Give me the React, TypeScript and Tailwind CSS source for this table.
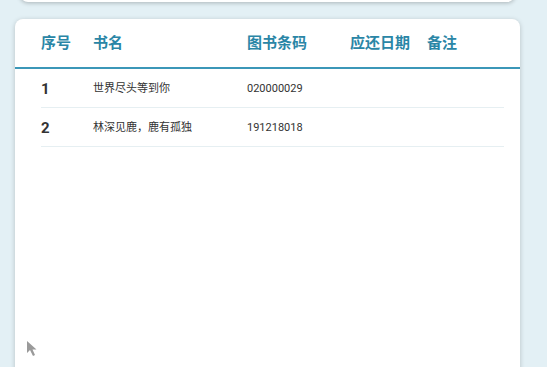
const rows = [
  { no: 1, title: "世界尽头等到你", code: "020000029", due: "", note: "" },
  { no: 2, title: "林深见鹿，鹿有孤独", code: "191218018", due: "", note: "" },
];

const font = { fontFamily: '"Roboto", "Noto Sans CJK SC", sans-serif' };

export default function App() {
  return (
    <div className="h-[367px] overflow-hidden bg-[#e3f0f5] relative" style={font}>
      {/* previous card, scrolled mostly out of view */}
      <div className="mt-[-100px] ml-[20px] w-[495px] h-[102px] rounded-lg bg-white shadow-[0_1px_4px_rgba(0,0,0,0.25)]" />

      <div className="mt-[17px] ml-[15px] w-[505px] h-[400px] rounded-lg bg-white shadow-[0_1px_5px_rgba(0,0,0,0.2)]">
        <div className="flex items-center h-[48px] pl-[26px] text-[15px] font-bold text-[#2a86a6]">
          <div className="w-[52px]">序号</div>
          <div className="w-[154px]">书名</div>
          <div className="w-[103px]">图书条码</div>
          <div className="w-[77px]">应还日期</div>
          <div>备注</div>
        </div>
        <div className="h-[2px] bg-[#3b97b8]" />

        <div className="ml-[26px] mr-[16px]">
          {rows.map((r) => (
            <div key={r.no} className="flex items-center h-[39px] pt-[3px] border-b border-[#e6eff2] text-[#333]">
              <div className="w-[52px] text-[15px] font-bold">{r.no}</div>
              <div className="w-[154px] text-[11px]">{r.title}</div>
              <div className="w-[103px] text-[11px]">{r.code}</div>
              <div className="w-[77px] text-[11px]">{r.due}</div>
              <div className="text-[11px]">{r.note}</div>
            </div>
          ))}
        </div>
      </div>

      {/* mouse pointer */}
      <svg className="absolute left-[26px] top-[340px]" width="12" height="18" viewBox="0 0 12 18">
        <path d="M1 1 L1 13 L4 10 L7 16 L9 15 L6.5 9.5 L10.5 9.5 Z" fill="#9a9a9a" />
      </svg>
    </div>
  );
}
